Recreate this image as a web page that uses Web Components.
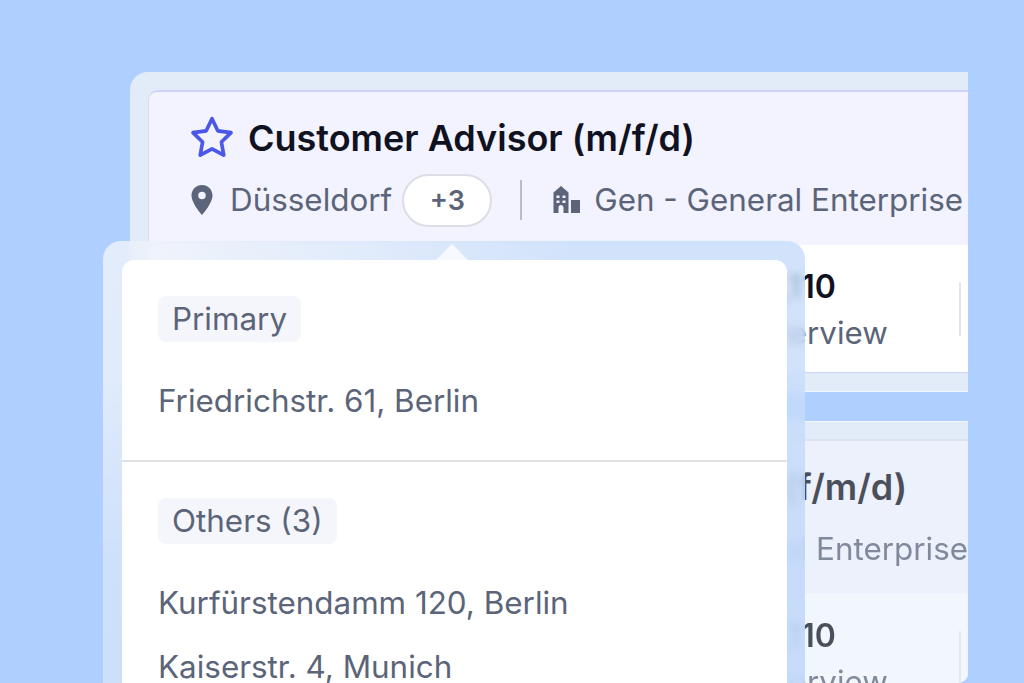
<!DOCTYPE html>
<html lang="en">
<head>
<meta charset="UTF-8">
<title>Job cards</title>
<style>
  html, body { margin: 0; height: 100%; }
  body { background: #aecfff; font-family: Inter, "Liberation Sans", sans-serif; overflow: hidden; }
</style>
</head>
<body>
<job-stage>
  <job-card location="Düsseldorf" count="+3" company="Gen - General Enterprise" stat="4,110" label="Interview">Customer Advisor (m/f/d)</job-card>
  <job-card faded location="Düsseldorf" count="+1" company="Gen - General Enterprise" stat="4,110" label="Interview">Customer Operations Manager (f/m/d)</job-card>
  <location-popover slot="over">
    <location-group name="Primary">
      <p>Friedrichstr. 61, Berlin</p>
    </location-group>
    <location-group name="Others (3)">
      <p>Kurfürstendamm 120, Berlin</p>
      <p>Kaiserstr. 4, Munich</p>
    </location-group>
  </location-popover>
</job-stage>

<script>
  class JobStage extends HTMLElement {
    constructor() {
      super();
      this.attachShadow({mode: "open"});
      this.shadowRoot.innerHTML = `
        <style>
          :host { display: block; position: relative; width: 1024px; height: 683px; overflow: hidden; }
          .cards { display: flex; flex-direction: column; gap: 29px; width: 838px; margin-left: 130px; padding-top: 72px; }
        </style>
        <div class="cards"><slot></slot></div>
        <slot name="over"></slot>`;
    }
  }

  class JobCard extends HTMLElement {
    constructor() {
      super();
      this.attachShadow({mode: "open"});
      const a = n => this.getAttribute(n);
      this.shadowRoot.innerHTML = `
        <style>
          :host { display: block; }
          .frame {
            padding: 18px 0 19px 18px;
            border-radius: 18px 0 0 18px;
            background: rgba(250, 249, 245, .68);
            box-shadow: inset 0 -1px 0 rgba(255, 255, 255, .5);
          }
          :host([faded]) .frame { height: 244px; padding-bottom: 0; border-radius: 18px 0 10px 0; box-shadow: inset 0 1px 0 rgba(255, 255, 255, .6); }
          .inner { border-top: 2px solid #ccd2fb; border-left: 1px solid #d5dbfb; border-radius: 10px 0 0 10px; overflow: hidden; }
          :host([faded]) .inner { border-color: #d9dfef; opacity: .72; height: 242px; border-radius: 10px 0 10px 0; background: #fff; }
          header { background: #f2f3fe; height: 153px; box-sizing: border-box; padding: 23px 0 0 42px; }
          .title { display: flex; align-items: center; gap: 13px; height: 46px; }
          :host([faded]) .title { gap: 5px; }
          h2 { margin: 0; font-size: 36px; line-height: 46px; font-weight: 600; color: #10121f; white-space: nowrap; }
          .star { width: 46px; height: 46px; flex: none; margin-left: -2px; }
          :host([faded]) .star { visibility: hidden; }
          .meta { display: flex; align-items: center; height: 54px; margin-top: 12px; font-size: 31.4px; color: #5b6478; white-space: nowrap; }
          .pin { width: 22px; height: 30px; margin-right: 17px; flex: none; }
          .count {
            box-sizing: border-box; width: 90px; height: 53px; margin-left: 10px; border-radius: 27px;
            border: 2px solid #dcdee6; background: #fff; display: flex; align-items: center; justify-content: center;
            font-size: 27px; font-weight: 600; color: #5b6478;
          }
          .rule { width: 2px; height: 40px; margin: 0 30px 0 28px; background: #b9bdca; flex: none; }
          :host([faded]) .rule { margin-left: 33px; }
          .building { width: 28px; height: 28px; margin-right: 14px; flex: none; }
          .body { background: #fff; height: 128px; display: flex; padding: 37px 0 0 603px; box-sizing: border-box; border-bottom: 1px solid #c9d6f6; }
          :host([faded]) .body { border: 0; background: #f7fbff; }
          .stat { display: flex; flex-direction: column; width: 207px; height: 54px; border-right: 2px solid #e4e6ef; }
          b { font-size: 32px; line-height: 36px; margin: -13px 0 0 8px; font-weight: 600; color: #10121f; }
          .stat span { font-size: 31.3px; line-height: 36px; margin-top: 10px; color: #5b6478; }
        </style>
        <div class="frame">
          <div class="inner">
            <header>
              <div class="title">
                <svg class="star" viewBox="0 0 43 43"><path d="M21.500 3.500l5.400 11.300 12.400 1.700-9 8.700 2.200 12.300-11-5.900-11 5.900 2.200-12.300-9-8.700 12.400-1.700z" fill="none" stroke="#4a57e8" stroke-width="3.400" stroke-linejoin="round"/></svg>
                <h2><slot></slot></h2>
              </div>
              <div class="meta">
                <svg class="pin" viewBox="5 2 14 20"><path fill="#5b6478" fill-rule="evenodd" d="M12 2C8.100 2 5 5.100 5 9c0 5.200 7 13 7 13s7-7.800 7-13c0-3.900-3.100-7-7-7zm0 9.500a2.500 2.500 0 1 1 0-5 2.500 2.500 0 0 1 0 5z"/></svg>
                <span>${a("location")}</span>
                <span class="count">${a("count")}</span>
                <i class="rule"></i>
                <svg class="building" viewBox="0 0 28 28"><path fill="#5b6478" fill-rule="evenodd" d="M9 0l7.500 6.500V27h-5v-5.500a2.500 2.500 0 0 0-5 0V27h-5V6.500zM4.500 9.500V12h3V9.500zm6 0V12h3V9.500zM4.500 14.500V17h3v-2.500zm6 0V17h3v-2.500zM19 14h9v13h-9z"/></svg>
                <span>${a("company")}</span>
              </div>
            </header>
            <div class="body">
              <div class="stat"><b>${a("stat")}</b><span>${a("label")}</span></div>
            </div>
          </div>
        </div>`;
    }
  }

  class LocationPopover extends HTMLElement {
    constructor() {
      super();
      this.attachShadow({mode: "open"});
      this.shadowRoot.innerHTML = `
        <style>
          :host {
            position: absolute; left: 103px; top: 241px; width: 702px; height: 460px; box-sizing: border-box;
            padding: 19px 18px 0 19px; border-radius: 18px;
            background:
              linear-gradient(180deg, rgba(190, 215, 250, 0) 30%, rgba(190, 215, 250, .5) 70%),
              linear-gradient(100deg, rgba(240, 243, 250, .8), rgba(198, 220, 250, .8) 60%);
            -webkit-backdrop-filter: blur(4px); backdrop-filter: blur(4px);
          }
          .caret {
            position: absolute; left: 333px; top: 3px; width: 32px; height: 16px;
            background: #f6f9fe; clip-path: polygon(50% 0, 100% 100%, 0 100%);
          }
          .panel { background: #fff; height: 100%; border-radius: 12px 12px 0 0; }
        </style>
        <i class="caret"></i>
        <div class="panel"><slot></slot></div>`;
    }
  }

  class LocationGroup extends HTMLElement {
    constructor() {
      super();
      this.attachShadow({mode: "open"});
      this.shadowRoot.innerHTML = `
        <style>
          :host { display: block; padding: 36px 36px 41px; font-size: 31.4px; color: #5b6478; }
          :host(:not(:last-child)) { border-bottom: 2px solid #dfe1e7; }
          .name {
            display: inline-block; height: 46px; line-height: 46px; padding: 0 14px; border-radius: 8px;
            background: #f5f6fb; margin-bottom: 41px;
          }
          ::slotted(p) { margin: 0 0 28px; line-height: 36px; white-space: nowrap; }
          ::slotted(p:last-child) { margin-bottom: 0; }
        </style>
        <div class="name">${this.getAttribute("name")}</div>
        <slot></slot>`;
    }
  }

  customElements.define("job-stage", JobStage);
  customElements.define("job-card", JobCard);
  customElements.define("location-popover", LocationPopover);
  customElements.define("location-group", LocationGroup);
</script>
</body>
</html>
